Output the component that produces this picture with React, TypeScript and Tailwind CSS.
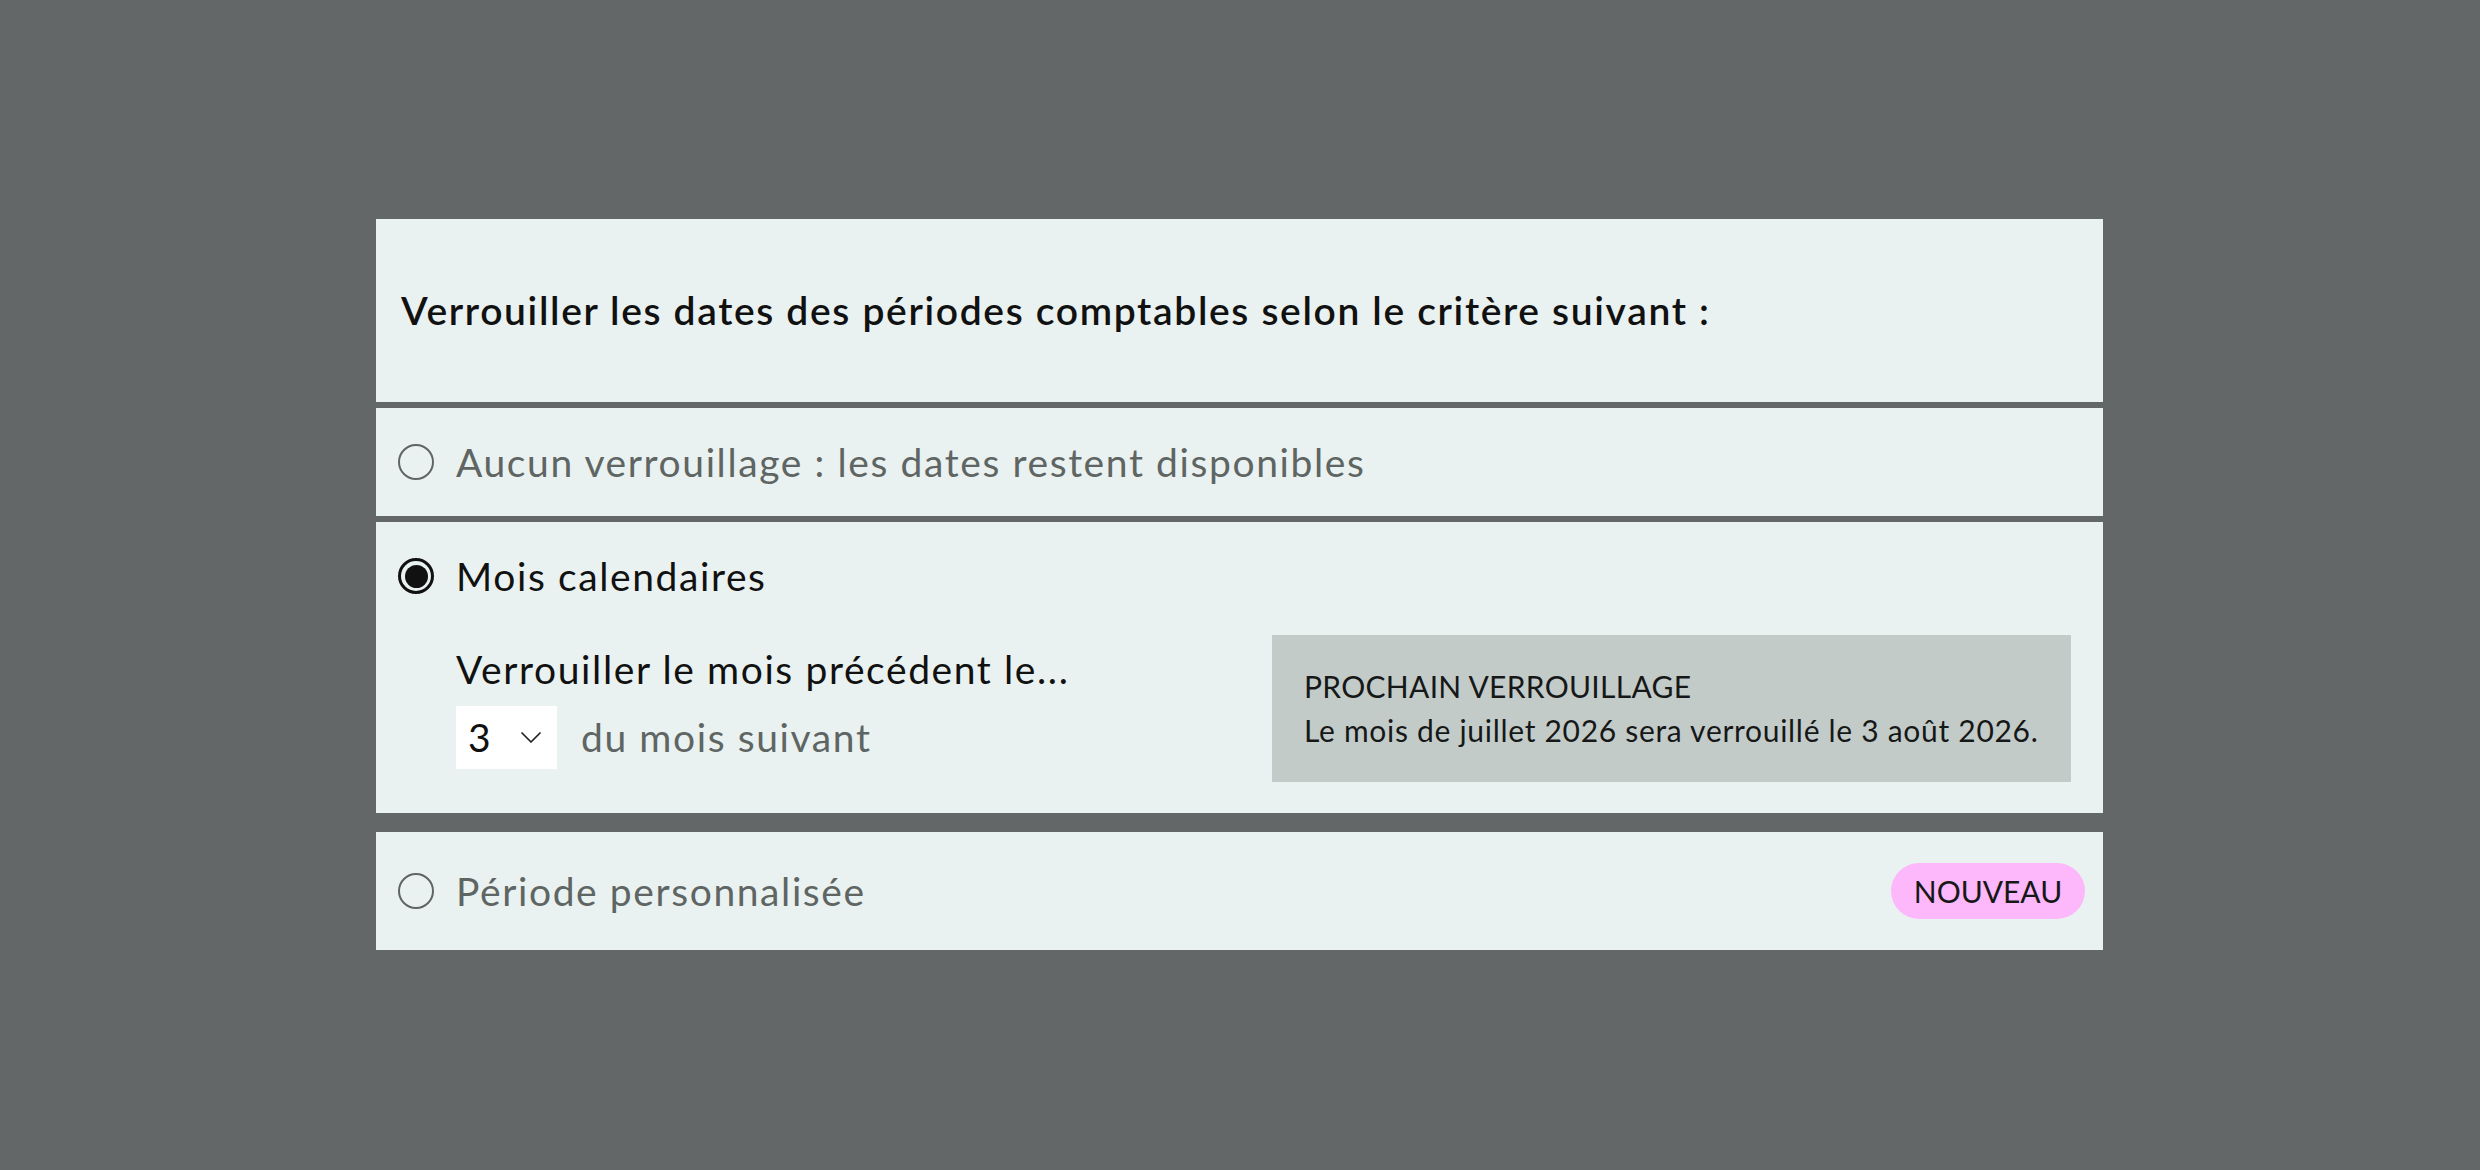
import React from 'react';

const font = { fontFamily: 'Lato, "Noto Sans", sans-serif' };

function Radio({ checked }: { checked?: boolean }) {
  if (checked) {
    return (
      <span className="flex h-[36px] w-[36px] shrink-0 items-center justify-center rounded-full border-[3px] border-[#111111]">
        <span className="h-[23px] w-[23px] rounded-full bg-[#111111]" />
      </span>
    );
  }
  return <span className="h-[36px] w-[36px] shrink-0 rounded-full border-[2.5px] border-[#5f6563]" />;
}

function Chevron() {
  return (
    <svg width="20" height="11" viewBox="0 0 20 11" fill="none">
      <polyline points="1,1 10,10 19,1" stroke="#222222" strokeWidth="1.7" strokeLinecap="round" strokeLinejoin="round" />
    </svg>
  );
}

export default function App() {
  return (
    <div className="h-[1170px] w-[2480px] overflow-hidden bg-[#646768] pt-[219px]" style={font}>
      <div className="ml-[376px] flex w-[1727px] flex-col">
        {/* en-tête */}
        <div className="flex h-[183px] items-center bg-[#e9f2f0] pl-[25px]">
          <h1 className="text-[39px] font-semibold leading-none tracking-[1.65px] text-[#111111]">
            Verrouiller les dates des périodes comptables selon le critère suivant :
          </h1>
        </div>

        {/* aucun verrouillage */}
        <label className="mt-[6px] flex h-[108px] items-center gap-[22px] bg-[#e9f2f0] pl-[22px]">
          <Radio />
          <span className="text-[39px] leading-none tracking-[1.6px] text-[#5f6563]">Aucun verrouillage : les dates restent disponibles</span>
        </label>

        {/* mois calendaires */}
        <div className="mt-[6px] flex h-[291px] flex-col bg-[#e9f2f0]">
          <label className="flex h-[108px] shrink-0 items-center gap-[22px] pl-[22px]">
            <Radio checked />
            <span className="text-[39px] leading-none tracking-[1.6px] text-[#111111]">Mois calendaires</span>
          </label>
          <div className="flex pr-[32px] pl-[80px]">
            <div className="flex flex-1 flex-col">
              <p className="mt-[16px] text-[39px] leading-[47px] tracking-[1.6px] text-[#111111]">Verrouiller le mois précédent le...</p>
              <div className="mt-[13px] flex items-center gap-[24px]">
                <div className="flex h-[63px] w-[101px] items-center justify-between bg-white pr-[16px] pl-[12px]">
                  <span className="text-[39px] leading-none text-[#111111]">3</span>
                  <Chevron />
                </div>
                <span className="text-[39px] leading-none tracking-[1.6px] text-[#5f6563]">du mois suivant</span>
              </div>
            </div>
            <div className="mt-[5px] w-[799px] bg-[#c3cbc9] px-[32px] pt-[29px] pb-[30px] text-[30px] leading-[44px] text-[#161818]">
              <p className="tracking-[0.3px]">PROCHAIN VERROUILLAGE</p>
              <p className="tracking-[0.7px]">Le mois de juillet 2026 sera verrouillé le 3 août 2026.</p>
            </div>
          </div>
        </div>

        {/* période personnalisée */}
        <label className="mt-[19px] flex h-[118px] items-center gap-[22px] bg-[#e9f2f0] pr-[18px] pl-[22px]">
          <Radio />
          <span className="flex-1 text-[39px] leading-none tracking-[1.6px] text-[#5f6563]">Période personnalisée</span>
          <span className="flex h-[56px] w-[194px] items-center justify-center rounded-full bg-[#fdb8fb] text-[30px] leading-none text-[#161818]">
            NOUVEAU
          </span>
        </label>
      </div>
    </div>
  );
}
